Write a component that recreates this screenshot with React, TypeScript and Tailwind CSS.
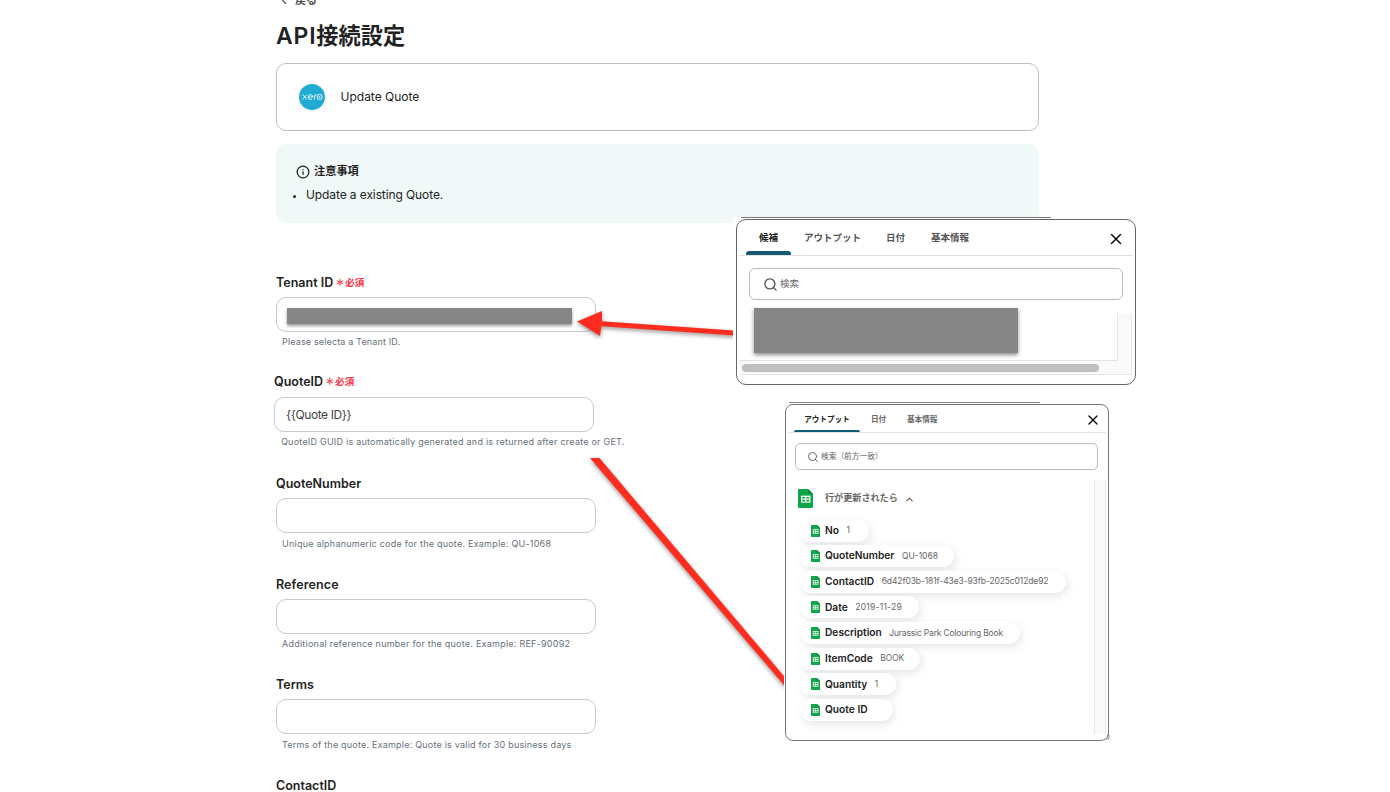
import { ChevronLeft, ChevronUp, Info, Search, X } from "lucide-react";

type Field = {
  label: string;
  hint?: string;
  value?: string;
  required?: boolean;
  redacted?: boolean;
  className: string;
  labelClass: string;
  hintClass: string;
};

const fields: Field[] = [
  {
    label: "Tenant ID",
    hint: "Please selecta a Tenant ID.",
    required: true,
    redacted: true,
    className: "h-[99px]",
    labelClass: "mb-[5px]",
    hintClass: "mt-[2px] tracking-[0.15px]",
  },
  {
    label: "QuoteID",
    hint: "QuoteID GUID is automatically generated and is returned after create or GET.",
    value: "{{Quote ID}}",
    required: true,
    className: "-ml-[2px] h-[102px]",
    labelClass: "mb-[6px]",
    hintClass: "mt-[2px] pl-[7px] tracking-[0.23px]",
  },
  {
    label: "QuoteNumber",
    hint: "Unique alphanumeric code for the quote. Example: QU-1068",
    className: "h-[101px]",
    labelClass: "mb-[5px]",
    hintClass: "mt-[3px] tracking-[0.23px]",
  },
  {
    label: "Reference",
    hint: "Additional reference number for the quote. Example: REF-90092",
    className: "h-[100px]",
    labelClass: "mb-[5px] tracking-[0.1px]",
    hintClass: "mt-[2px] tracking-[0.24px]",
  },
  {
    label: "Terms",
    hint: "Terms of the quote. Example: Quote is valid for 30 business days",
    className: "h-[101px]",
    labelClass: "mb-[5px]",
    hintClass: "mt-[3px] tracking-[0.21px]",
  },
  {
    label: "ContactID",
    className: "h-[100px]",
    labelClass: "mb-[5px]",
    hintClass: "",
  },
];

const outputs = [
  { name: "No", value: "1", width: "w-[69px]", tracking: "tracking-normal" },
  { name: "QuoteNumber", value: "QU-1068", width: "w-[154px]", tracking: "tracking-normal" },
  {
    name: "ContactID",
    value: "6d42f03b-181f-43e3-93fb-2025c012de92",
    width: "w-[266px]",
    tracking: "tracking-[-0.11px]",
  },
  { name: "Date", value: "2019-11-29", width: "w-[119px]", tracking: "tracking-[0.25px]" },
  {
    name: "Description",
    value: "Jurassic Park Colouring Book",
    width: "w-[220px]",
    tracking: "tracking-[-0.18px]",
  },
  { name: "ItemCode", value: "BOOK", width: "w-[120px]", tracking: "tracking-[-0.1px]" },
  { name: "Quantity", value: "1", width: "w-[96px]", tracking: "tracking-normal" },
  { name: "Quote ID", value: "", width: "w-[93px]", tracking: "tracking-normal" },
];

function SheetIcon({ className }: { className: string }) {
  return (
    <svg viewBox="0 0 15 20" preserveAspectRatio="none" className={className}>
      <path d="M1.2 0H10l5 5v13.8a1.2 1.2 0 0 1-1.2 1.2H1.2A1.2 1.2 0 0 1 0 18.8V1.2A1.2 1.2 0 0 1 1.2 0z" fill="#0fa549" />
      <path d="M10 0l5 5h-3.8A1.2 1.2 0 0 1 10 3.8z" fill="#0b8a3c" />
      <path d="M3 7h9.4v7.4H3z" fill="#f3fbf6" />
      <path d="M4.3 8.3h2.8v1.8H4.3zM8.3 8.3h2.8v1.8H8.3zM4.3 11.3h2.8v1.8H4.3zM8.3 11.3h2.8v1.8H8.3z" fill="#0fa549" />
    </svg>
  );
}

function FormField({ field }: { field: Field }) {
  return (
    <div className={`w-[360px] shrink-0 ${field.className}`}>
      <div className={`flex h-5 items-center gap-[2px] pt-[2px] ${field.labelClass}`}>
        <span className="text-[12.5px] font-semibold text-[#222]">{field.label}</span>
        {field.required && (
          <span className="flex items-center text-[9.6px] font-bold text-[#ff3347]">
            <span className="mr-px w-[9px]">＊</span>必須
          </span>
        )}
      </div>
      <div className="flex h-[35px] w-[320px] items-center rounded-[10px] border border-[#c4cad2] px-[10px] text-[12px] text-[#444]">
        {field.redacted && <div className="mt-[3px] h-4 w-[285px] bg-[#868686] shadow-[0_2px_3px_rgba(0,0,0,0.4)]" />}
        {field.value && <span className="pl-px tracking-[-0.4px]">{field.value}</span>}
      </div>
      <p className={`h-4 pl-[6px] text-[9px] leading-4 whitespace-nowrap text-[#66707a] ${field.hintClass}`}>
        {field.hint}
      </p>
    </div>
  );
}

function SuggestionPanel() {
  return (
    <div className="absolute top-[217px] left-[733px] h-[171px] w-[405px] bg-white pt-[2px] pl-[3px]">
      <div className="absolute top-0 left-[8px] h-px w-[310px] rounded-full bg-[#777]" />
      <div className="flex h-[166px] w-[400px] flex-col rounded-[10px] border border-[#666] px-[2px]">
        <div className="flex h-9 shrink-0 items-start border-b border-[#e0e0e0] pl-[7px] text-[9.5px] font-bold text-[#555]">
          <div className="flex h-[35px] w-[45px] flex-col items-center text-[#222]">
            <span className="flex h-[31px] shrink-0 items-center pt-[5px]">候補</span>
            <span className="h-1 w-full shrink-0 rounded-t-[3px] bg-[#155a75]" />
          </div>
          <span className="ml-[13px] flex h-[36px] w-[82px] items-center">アウトプット</span>
          <span className="flex h-[36px] w-[45px] items-center">日付</span>
          <span className="flex h-[36px] items-center">基本情報</span>
          <X className="mt-[10px] mr-[8px] ml-auto size-[18px] text-[#111]" strokeWidth={2} />
        </div>
        <div className="mt-3 ml-[10px] flex h-8 w-[374px] shrink-0 items-center rounded-[6px] border border-[#bbb] pl-[13px]">
          <Search className="size-[15px] text-[#555]" strokeWidth={2.2} />
          <span className="ml-[2px] pt-px text-[9.5px] text-[#666]">検索</span>
        </div>
        <div className="flex w-[393px] flex-col">
          <div className="flex h-[61px] shrink-0">
            <div className="flex h-[61px] w-[379px] items-start border-b border-[#e3e3e3] pt-2 pl-[15px]">
              <div className="h-[45px] w-[264px] bg-[#868686] shadow-[0_2px_4px_rgba(0,0,0,0.45)]" />
            </div>
            <div className="mt-[13px] h-[48px] w-[15px] border-x border-[#e6e6e6] bg-[#fafafa]" />
          </div>
          <div className="flex h-[14px] shrink-0 items-center border-r border-b border-[#e6e6e6] bg-[#fafafa] pl-[3px]">
            <span className="mt-px h-2 w-[357px] rounded-full bg-[#bfbfbf]" />
          </div>
        </div>
      </div>
    </div>
  );
}

function OutputPanel() {
  return (
    <div className="absolute top-[402px] left-[784px] h-[342px] w-[330px] bg-white pt-[2px] pl-px">
      <div className="absolute top-0 left-[5px] h-px w-[251px] rounded-full bg-[#888]" />
      <svg viewBox="0 0 6 8" className="absolute top-[330px] left-[320px] h-2 w-[6px]">
        <path d="M3 3h2v3.5L2 7.5" fill="none" stroke="#888" />
      </svg>
      <div className="flex h-[337px] w-[324px] flex-col rounded-[8px] border border-[#777] px-[2px]">
        <div className="flex h-7 shrink-0 items-start border-b border-[#e2e2e2] pl-[6px] text-[7.6px] font-bold text-[#666]">
          <div className="flex h-[27px] w-[66px] flex-col items-center text-[#222]">
            <span className="flex h-[25px] shrink-0 items-center pt-1">アウトプット</span>
            <span className="h-[2px] w-full shrink-0 rounded-t-[2px] bg-[#155a75]" />
          </div>
          <span className="ml-[11px] flex h-[29px] w-[36px] items-center">日付</span>
          <span className="flex h-[29px] items-center">基本情報</span>
          <X className="mt-[7px] mr-[5px] ml-auto size-[16px] text-[#111]" strokeWidth={2} />
        </div>
        <div className="mt-[10px] ml-[7px] flex h-[27px] w-[303px] shrink-0 items-center rounded-[5px] border border-[#bbb] pl-[11px]">
          <Search className="size-3 text-[#666]" strokeWidth={2} />
          <span className="ml-[2px] text-[7.7px] text-[#666]">検索（前方一致）</span>
        </div>
        <div className="mt-[10px] flex h-[254px]">
          <div className="flex w-[306px] flex-col pt-2 pl-[10px]">
            <div className="flex h-5 items-center">
              <SheetIcon className="mt-px h-[19px] w-[15px]" />
              <span className="ml-3 text-[9.1px] font-bold text-[#666]">行が更新されたら</span>
              <ChevronUp className="mt-[3px] ml-[6px] size-[11px] text-[#555]" strokeWidth={2.2} />
            </div>
            <div className="mt-[11.5px] flex flex-col gap-[3.65px] pl-[2px]">
              {outputs.map((o) => (
                <div
                  key={o.name}
                  className={`flex h-[22px] shrink-0 items-center rounded-full bg-white pl-[11px] whitespace-nowrap shadow-[2px_3px_8px_rgba(0,0,0,0.1)] ${o.width}`}
                >
                  <SheetIcon className="h-3 w-[9px]" />
                  <span className="ml-[5px] text-[10.2px] font-semibold text-[#222]">{o.name}</span>
                  <span className={`ml-[7.5px] text-[8.5px] text-[#666] ${o.tracking}`}>{o.value}</span>
                </div>
              ))}
            </div>
          </div>
          <div className="h-[254px] w-3 border-x border-[#e6e6e6] bg-[#fafafa]" />
        </div>
      </div>
    </div>
  );
}

export default function App() {
  return (
    <div className="relative h-[792px] w-[1390px] overflow-hidden bg-white font-['Inter','Noto_Sans_CJK_JP',sans-serif] text-[#222]">
      <main className="ml-[276px] flex w-[763px] flex-col">
        <div className="-mt-[10px] flex h-5 items-center pl-px text-[11px] font-bold text-[#555]">
          <ChevronLeft className="size-[14px]" />
          <span className="ml-1">戻る</span>
        </div>
        <h1 className="mt-[10px] h-8 text-[22.2px] leading-8 font-bold">
          <span className="text-[23px] font-semibold tracking-[0.8px]">API</span>接続設定
        </h1>
        <section className="mt-[11px] flex h-[68px] items-center rounded-[10px] border border-[#bfbfbf] pl-[22px]">
          <span className="flex size-[26px] items-center justify-center rounded-full bg-[#1fabd2]">
            <svg viewBox="0 0 21 8" className="h-2 w-[21px]" fill="none" stroke="#fff" strokeWidth="0.9">
              <path d="M.5 1.5l4.5 5M5 1.5l-4.5 5M6.2 4h4.6a2.3 2.4 0 1 0-.8 1.9M12.3 6.7V3.5q0-1.9 2-1.9" />
              <circle cx="17.6" cy="4" r="2.6" />
              <circle cx="17.6" cy="4" r="0.5" />
            </svg>
          </span>
          <span className="ml-[15.5px] text-[12px]">Update Quote</span>
        </section>
        <section className="mt-[13px] h-[79px] rounded-[10px] bg-[#f0f9f8] pt-[17px] pl-5">
          <div className="flex h-5 items-center">
            <Info className="mt-[2px] size-[14px]" strokeWidth={2.2} />
            <span className="ml-1 text-[11.2px] font-bold">注意事項</span>
          </div>
          <ul className="mt-1 flex h-5 items-center text-[12px] tracking-[-0.1px]">
            <li className="flex items-center">
              <span className="mt-[3px] mr-[10px] -ml-[3px] size-[3px] rounded-full bg-[#222]" />
              Update a existing Quote.
            </li>
          </ul>
        </section>
        <form className="mt-[49px] flex flex-col">
          {fields.map((field) => (
            <FormField key={field.label} field={field} />
          ))}
        </form>
      </main>
      {/* pointers from the panels to the fields */}
      <svg viewBox="0 0 1390 792" className="absolute top-0 left-0 h-[792px] w-[1390px] drop-shadow-[0_2px_2px_rgba(0,0,0,0.4)]">
        <path d="M577 321.5L602 311v10.2L734 330.5v5L601.5 326.2L600 336z" fill="#ff2d1f" />
        <path d="M590 458h9.5L786 678.5v9z" fill="#ff2d1f" />
      </svg>
      <SuggestionPanel />
      <OutputPanel />
    </div>
  );
}
